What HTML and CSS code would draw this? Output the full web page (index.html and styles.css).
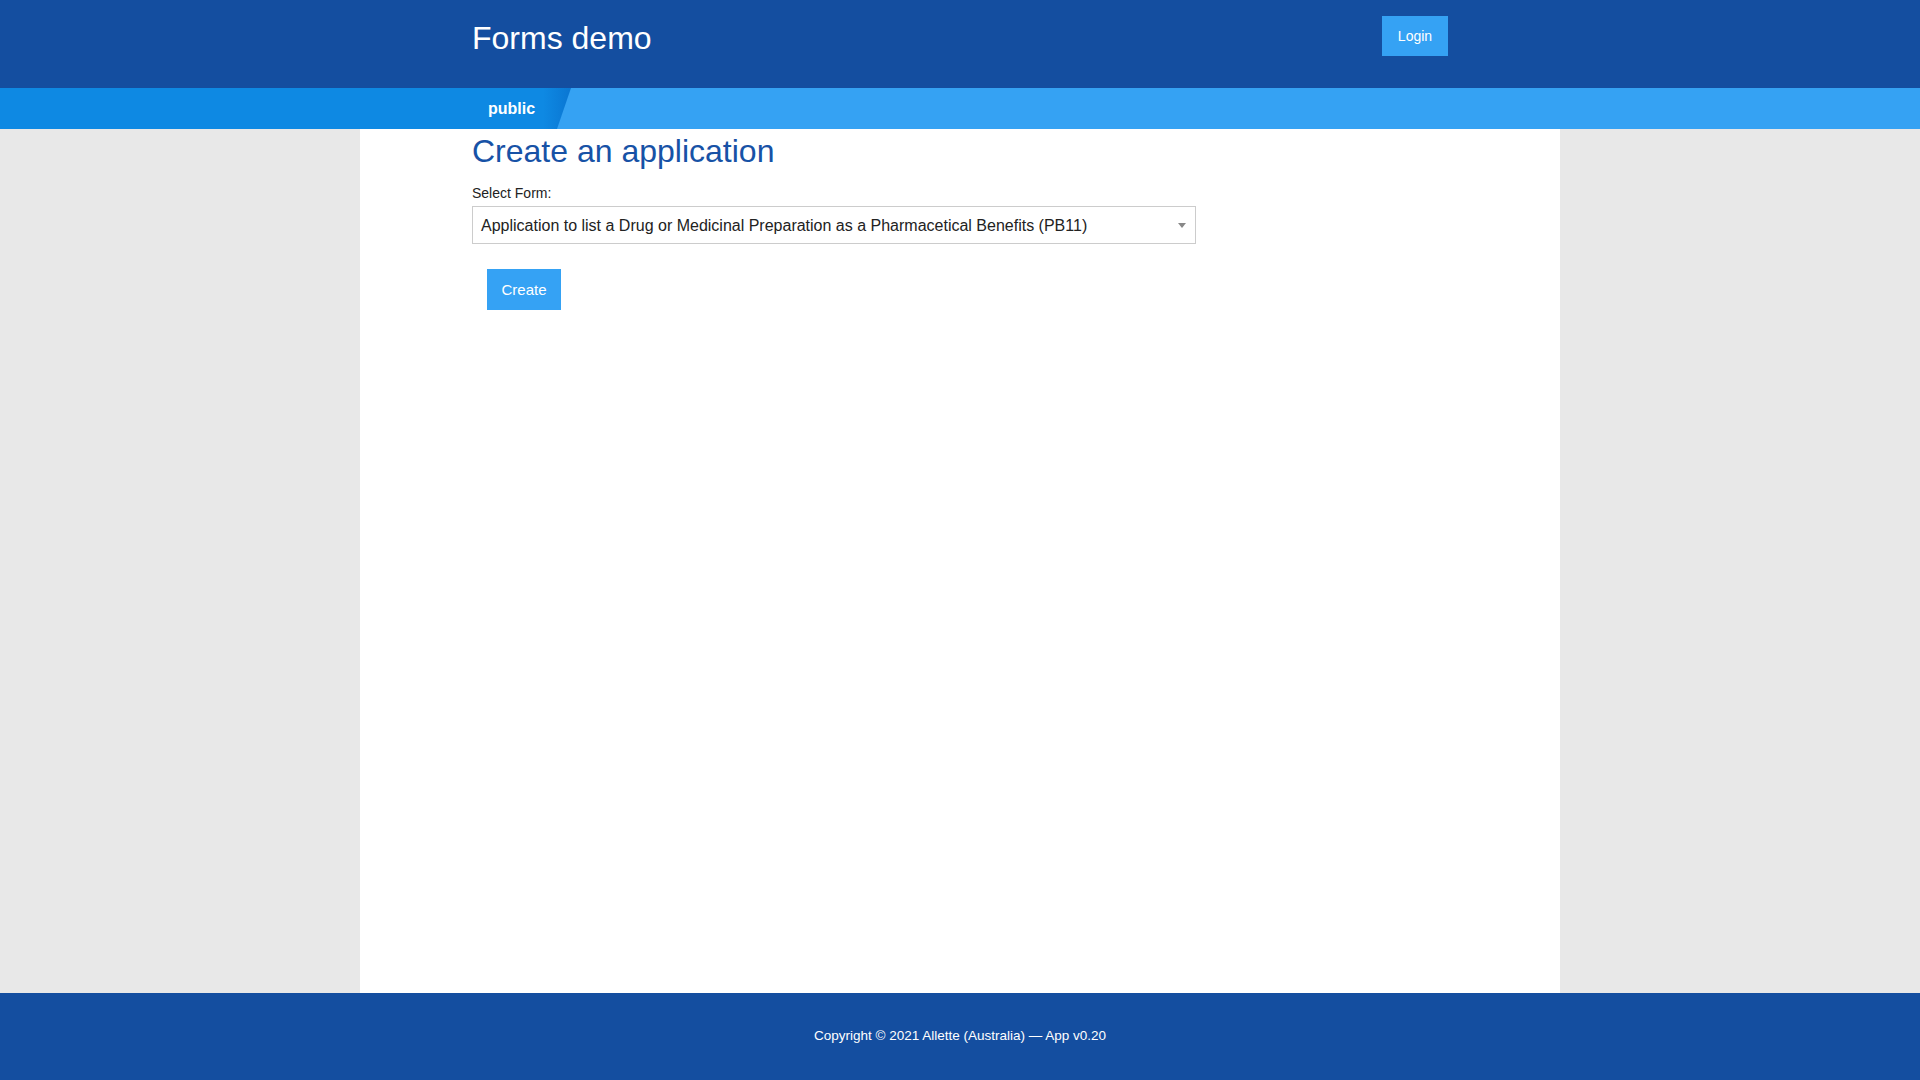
FILE: index.html
```html
<!DOCTYPE html>
<html lang="en">
<head>
<meta charset="utf-8">
<title>Forms demo</title>
<link rel="stylesheet" href="styles.css">
</head>
<body>
<div class="page">
  <header class="header">
    <div class="wrap header-inner">
      <div class="brand">Forms demo</div>
      <button class="btn btn-login">Login</button>
    </div>
  </header>
  <nav class="tabbar">
    <div class="wrap tabbar-inner">
      <div class="tab">public</div>
    </div>
  </nav>
  <main class="main">
    <div class="sheet">
      <div class="wrap">
        <h1 class="title">Create an application</h1>
        <label class="label">Select Form:</label>
        <div class="select">
          <span class="select-text">Application to list a Drug or Medicinal Preparation as a Pharmacetical Benefits (PB11)</span>
          <span class="select-arrow"></span>
        </div>
        <button class="btn btn-create">Create</button>
      </div>
    </div>
  </main>
  <footer class="footer">Copyright © 2021 Allette (Australia) — App v0.20</footer>
</div>
</body>
</html>
```

FILE: styles.css
```css
* { box-sizing: border-box; }
html, body { margin: 0; padding: 0; }
body {
  font-family: "Liberation Sans", Arial, sans-serif;
  color: #222;
  background: #e8e8e8;
}
.page {
  display: flex;
  flex-direction: column;
  min-height: 100vh;
}
.wrap {
  width: 976px;
  margin: 0 auto;
}
.header {
  background: #144ea0;
  height: 88px;
  flex: none;
}
.header-inner {
  display: flex;
  justify-content: space-between;
  align-items: flex-start;
  padding-top: 16px;
}
.brand {
  color: #fff;
  font-size: 32px;
  line-height: 37px;
  padding-top: 4px;
}
.btn {
  border: 0;
  border-radius: 0;
  background: #35a2f4;
  color: #fff;
  font-family: "Liberation Sans", Arial, sans-serif;
  cursor: pointer;
  padding: 0;
}
.btn-login {
  width: 66px;
  height: 40px;
  font-size: 14px;
}
.tabbar {
  flex: none;
  height: 41px;
  background: linear-gradient(to right, #0e89e3 50%, #35a2f3 50%);
}
.tabbar-inner {
  height: 100%;
  background: #35a2f3;
  display: flex;
}
.tab {
  width: 99px;
  height: 100%;
  padding-left: 16px;
  color: #fff;
  font-weight: bold;
  font-size: 16px;
  line-height: 41px;
  background: linear-gradient(to right, #0e89e3 72%, #0a76d2 100%);
  clip-path: polygon(0 0, 100% 0, calc(100% - 14px) 100%, 0 100%);
}
.main {
  flex: 1;
  display: flex;
  justify-content: center;
}
.sheet {
  width: 1200px;
  background: #fff;
}
.title {
  margin: 0;
  padding-top: 4px;
  font-size: 32px;
  line-height: 37px;
  font-weight: normal;
  color: #1752a6;
}
.label {
  display: block;
  margin-top: 15px;
  font-size: 14px;
  line-height: 16px;
  color: #222;
}
.select {
  margin-top: 5px;
  width: 724px;
  height: 38px;
  border: 1px solid #cccccc;
  display: flex;
  align-items: center;
  justify-content: space-between;
  padding: 1px 9px 0 8px;
  background: #fff;
}
.select-text {
  font-size: 16px;
  color: #222;
  white-space: nowrap;
}
.select-arrow {
  width: 0;
  height: 0;
  border-left: 4px solid transparent;
  border-right: 4px solid transparent;
  border-top: 5px solid #888;
}
.btn-create {
  display: block;
  margin: 25px 0 0 15px;
  width: 74px;
  height: 41px;
  font-size: 15px;
}
.footer {
  flex: none;
  height: 87px;
  padding-bottom: 3px;
  background: #144ea0;
  color: #fff;
  font-size: 13.5px;
  display: flex;
  align-items: center;
  justify-content: center;
}
```
